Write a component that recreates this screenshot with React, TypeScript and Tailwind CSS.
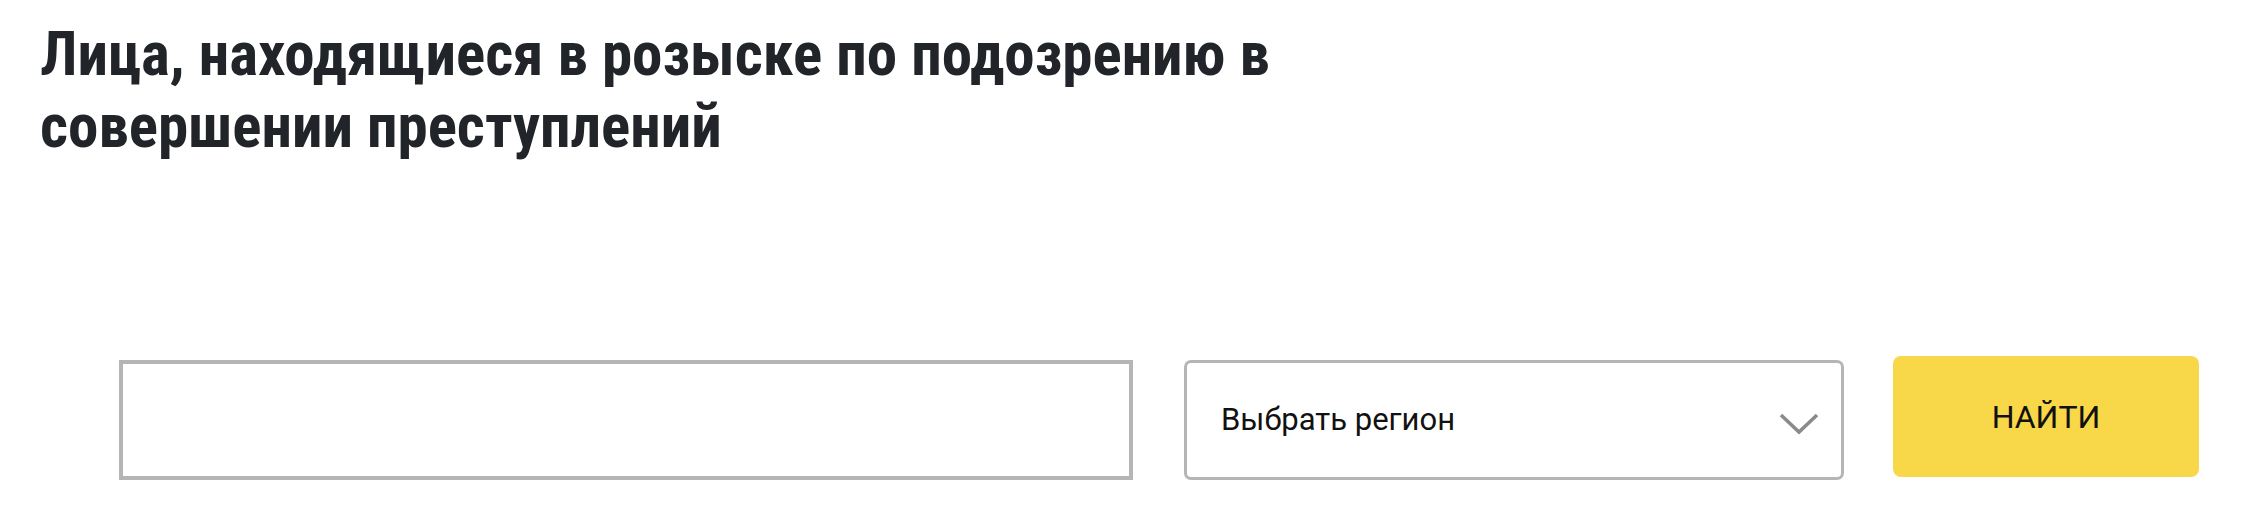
import { useState } from "react";

// Поисковая форма: лица в розыске
export default function App() {
  const [query, setQuery] = useState("");
  const [region, setRegion] = useState("");

  return (
    <div className="min-h-[518px] w-[2247px] bg-white font-['Roboto','Liberation_Sans',sans-serif] text-[#111]">
      <div className="pl-[40px] pt-[18px]">
        <h1 className="w-[1320px] text-[61px] font-bold leading-[72px] text-[#212428] [font-stretch:87%]">
          Лица, находящиеся в розыске по подозрению в совершении преступлений
        </h1>
      </div>

      {/* форма поиска */}
      <div className="mt-[198px] flex items-start pl-[119px]">
        <input
          value={query}
          onChange={(e) => setQuery(e.target.value)}
          className="h-[120px] w-[1014px] border-4 border-[#b5b5b5] px-6 text-[30px] outline-none"
        />
        <div className="relative ml-[51px] h-[120px] w-[660px] rounded-[7px] border-[3px] border-[#b5b5b5]">
          <select
            value={region}
            onChange={(e) => setRegion(e.target.value)}
            className="h-full w-full appearance-none bg-transparent pl-[34px] text-[31px] text-[#111] outline-none"
          >
            <option value="">Выбрать регион</option>
          </select>
          <svg
            className="pointer-events-none absolute right-[22px] top-[50px]"
            width="40"
            height="22"
            viewBox="0 0 40 22"
            fill="none"
          >
            <path d="M2 2 L20 19 L38 2" stroke="#8a8a8a" strokeWidth="3.5" />
          </svg>
        </div>
        <button className="-mt-[4px] ml-[49px] h-[121px] w-[306px] rounded-[8px] bg-[#f8d748] text-[32px] text-[#111]">
          НАЙТИ
        </button>
      </div>
    </div>
  );
}
